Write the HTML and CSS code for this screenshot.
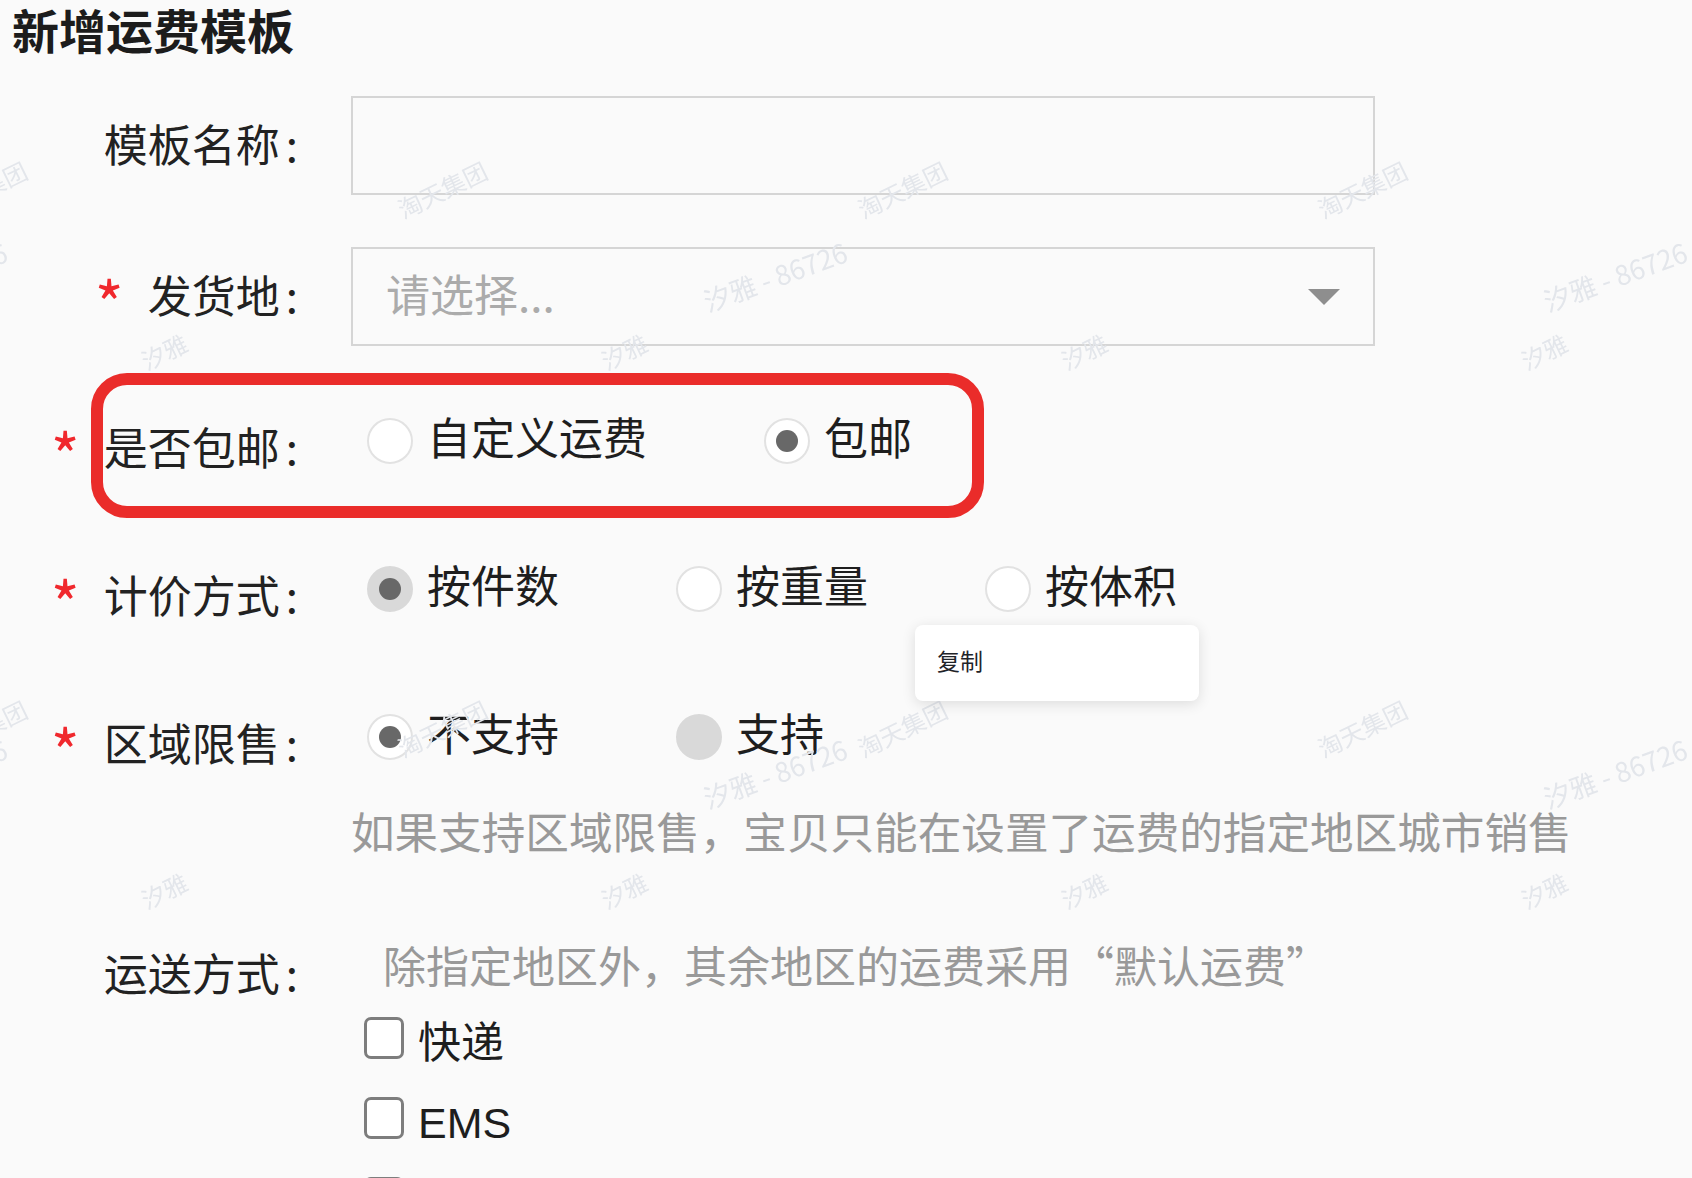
FILE: index.html
```html
<!DOCTYPE html>
<html>
<head>
  <meta charset="UTF-8">
  <title>新增运费模板</title>
  <link rel="stylesheet" href="styles.css">
</head>
<body>
  <div class="page">
    <h1 class="page-title">新增运费模板</h1>

    <div class="form">
      <!-- 模板名称 -->
      <div class="form-row input-row">
        <label class="form-label">模板名称</label>
        <div class="form-field">
          <div class="text-input"></div>
        </div>
      </div>

      <!-- 发货地 -->
      <div class="form-row input-row">
        <label class="form-label required">发货地</label>
        <div class="form-field">
          <div class="select">
            <span class="select-placeholder">请选择...</span>
            <span class="select-arrow"></span>
          </div>
        </div>
      </div>

      <!-- 是否包邮 (marked) -->
      <div class="form-row radio-row marked-row">
        <label class="form-label required">是否包邮</label>
        <div class="radio-group">
          <span class="radio"><span class="radio-circle"></span><span class="radio-text">自定义运费</span></span>
          <span class="radio is-checked"><span class="radio-circle"></span><span class="radio-text">包邮</span></span>
        </div>
        <div class="mark-ring"></div>
      </div>

      <!-- 计价方式 -->
      <div class="form-row radio-row">
        <label class="form-label required">计价方式</label>
        <div class="radio-group">
          <span class="radio is-checked is-disabled"><span class="radio-circle"></span><span class="radio-text">按件数</span></span>
          <span class="radio"><span class="radio-circle"></span><span class="radio-text">按重量</span></span>
          <span class="radio"><span class="radio-circle"></span><span class="radio-text">按体积</span></span>
        </div>
      </div>

      <!-- 区域限售 -->
      <div class="form-row radio-row">
        <label class="form-label required">区域限售</label>
        <div class="radio-group">
          <span class="radio is-checked"><span class="radio-circle"></span><span class="radio-text">不支持</span></span>
          <span class="radio is-disabled"><span class="radio-circle"></span><span class="radio-text">支持</span></span>
        </div>
      </div>
      <div class="form-tip">如果支持区域限售，宝贝只能在设置了运费的指定地区城市销售</div>

      <!-- 运送方式 -->
      <div class="form-row list-row">
        <label class="form-label">运送方式</label>
        <div class="form-field">
          <div class="field-tip">除指定地区外，其余地区的运费采用“默认运费”</div>
          <div class="check-list">
            <label class="check"><span class="check-box"></span><span class="check-text">快递</span></label>
            <label class="check"><span class="check-box"></span><span class="check-text">EMS</span></label>
            <label class="check"><span class="check-box"></span></label>
          </div>
        </div>
      </div>
    </div>

    <!-- tiled watermark -->
    <svg class="watermark" width="1692" height="1178">
      <defs>
        <pattern id="wm-team" x="73" y="0" width="460" height="539" patternUnits="userSpaceOnUse">
          <text class="wm-text" x="91" y="351" transform="rotate(-26 91 351)">汐雅</text>
          <text class="wm-text" x="369" y="189" transform="rotate(-26 369 189)">淘天集团</text>
        </pattern>
        <pattern id="wm-user" x="355" y="0" width="840" height="497" patternUnits="userSpaceOnUse">
          <text class="wm-text wm-id" x="420" y="276" transform="rotate(-20 420 276)">汐雅 - 86726</text>
        </pattern>
      </defs>
      <rect width="1692" height="1178" fill="url(#wm-team)"/>
      <rect width="1692" height="1178" fill="url(#wm-user)"/>
    </svg>

    <!-- context menu -->
    <div class="context-menu">
      <div class="context-item">复制</div>
    </div>
  </div>
</body>
</html>
```

FILE: styles.css
```css
html, body {
  margin: 0;
  overflow: hidden;
}
body {
  background-color: #fafafa;
  font-family: "Noto Sans CJK SC", "Noto Sans", sans-serif;
  color: #222;
}
.page {
  position: relative;
  height: 1178px;
  overflow: hidden;
}
.page-title {
  margin: 0;
  padding-left: 12px;
  font-family: "Liberation Sans", "Noto Sans CJK SC", sans-serif;
  font-size: 47px;
  line-height: 66px;
  font-weight: 700;
  color: #1c1c1c;
}

/* form rows */
.form-row {
  display: grid;
  grid-template-columns: 298px 1fr;
  column-gap: 53px;
  align-items: center;
  position: relative;
}
.form-label {
  text-align: right;
  font-size: 44px;
  line-height: 60px;
  white-space: nowrap;
  color: #222;
}
.form-label::after {
  content: ":";
  margin-left: 6px;
}
.required::before {
  content: "*";
  color: #f0282d;
  font-size: 62px;
  line-height: 0;
  margin-right: 24px;
  vertical-align: -15px;
}
.input-row .form-label {
  margin-bottom: 5px;
}
.input-row:first-child {
  margin-top: 30px;
}
.input-row + .input-row {
  margin-top: 52px;
}
.text-input,
.select {
  width: 1024px;
  height: 99px;
  box-sizing: border-box;
  border: 2px solid #d5d5d5;
  background-color: transparent;
}
.select {
  display: flex;
  align-items: center;
  justify-content: space-between;
  padding: 0 33px 0 33px;
}
.select-placeholder {
  font-size: 44px;
  line-height: 60px;
  margin-bottom: 8px;
  color: #ababab;
}
.select-arrow {
  width: 0;
  height: 0;
  border-left: 16px solid transparent;
  border-right: 16px solid transparent;
  border-top: 16px solid #8e8e8e;
}

/* radios */
.radio-row {
  height: 72px;
  margin-top: 76px;
}
.marked-row {
  margin-top: 59px;
}
.radio-row .form-label {
  padding-top: 9px;
}
.radio-group {
  display: flex;
  align-items: center;
  gap: 117px;
  padding-left: 16px;
}
.radio {
  display: flex;
  align-items: center;
  gap: 14px;
  font-size: 44px;
  line-height: 60px;
  color: #1e1e1e;
}
.radio-text {
  margin-bottom: 11px;
}
.radio-circle {
  width: 46px;
  height: 46px;
  box-sizing: border-box;
  border: 2px solid #e2e2e2;
  border-radius: 50%;
  background-color: #fff;
  display: flex;
  align-items: center;
  justify-content: center;
}
.radio.is-checked .radio-circle::after {
  content: "";
  width: 22px;
  height: 22px;
  border-radius: 50%;
  background-color: #686868;
}
.radio.is-disabled .radio-circle {
  background-color: #d9d9d9;
  border-color: #d9d9d9;
}
.mark-ring {
  position: absolute;
  left: 91px;
  top: -32px;
  width: 893px;
  height: 145px;
  box-sizing: border-box;
  border: 12px solid #ea2c2a;
  border-radius: 36px;
}

.form-tip {
  margin: 27px 0 0 351px;
  font-size: 43.6px;
  line-height: 60px;
  color: #999;
  white-space: nowrap;
}

/* shipping methods */
.list-row {
  align-items: start;
  margin-top: 74px;
}
.list-row .form-label {
  padding-top: 8px;
}
.field-tip {
  padding-left: 32px;
  font-size: 43px;
  line-height: 60px;
  color: #999;
  white-space: nowrap;
}
.check-list {
  margin-top: 9px;
  padding-left: 13px;
}
.check {
  display: flex;
  align-items: center;
  gap: 14px;
  height: 80px;
  font-size: 43px;
}
.check-box {
  width: 40px;
  height: 42px;
  box-sizing: border-box;
  border: 3px solid #7d7d7d;
  border-radius: 7px;
  background-color: #fff;
  margin-bottom: 11px;
}
.check-text {
  font-family: "Liberation Sans", "Noto Sans CJK SC", sans-serif;
  line-height: 60px;
  color: #1e1e1e;
}

/* watermark overlay */
.watermark {
  position: absolute;
  left: 0;
  top: 0;
  z-index: 1;
  pointer-events: none;
}
.wm-text {
  font-family: "Noto Sans CJK SC", sans-serif;
  font-size: 24px;
  fill: #e3e6eb;
  text-anchor: middle;
  dominant-baseline: central;
}
.wm-id {
  font-size: 27px;
}

/* context menu */
.context-menu {
  position: absolute;
  left: 915px;
  top: 625px;
  width: 284px;
  height: 76px;
  z-index: 2;
  background-color: #fff;
  border-radius: 8px;
  box-shadow: 0 3px 14px rgba(0, 0, 0, 0.12);
  display: flex;
  align-items: center;
}
.context-item {
  padding: 0 0 6px 22px;
  font-size: 23px;
  color: #1f2329;
}
```
